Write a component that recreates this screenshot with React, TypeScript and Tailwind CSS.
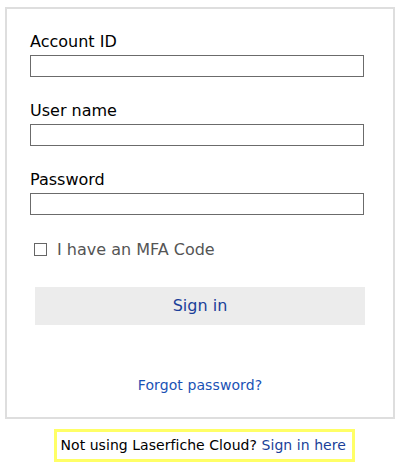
export default function App() {
  const fields = ["Account ID", "User name", "Password"]
  return (
    <div className="min-h-screen bg-white pt-[7px] font-['DejaVu_Sans',sans-serif] text-black">
      <main className="mx-[5px] w-[390px] border-2 border-[#dedede] px-[23px] pt-[23px] pb-[23px]">
        {fields.map((label) => (
          <div key={label} className="mb-[24px]">
            <label className="block text-[16px] leading-[19px]">{label}</label>
            <input
              type={label === "Password" ? "password" : "text"}
              className="mt-1 block h-[22px] w-[334px] border border-[#6b6b6b] px-1 text-[14px] outline-none"
            />
          </div>
        ))}

        <label className="mt-[25px] flex items-center text-[16px] leading-[19px] text-[#555]">
          <input
            type="checkbox"
            className="ml-1 mr-[10px] h-[13px] w-[13px] appearance-none border border-[#666] bg-white"
          />
          I have an MFA Code
        </label>

        <button className="ml-[5px] mt-[28px] block h-[38px] w-[330px] bg-[#ececec] text-[16px] text-[#1a3f99]">
          Sign in
        </button>

        <div className="mt-[52px] text-center text-[14px] leading-[17px]">
          <a href="#" className="tracking-[0.1px] text-[#1a52b5]">
            Forgot password?
          </a>
        </div>
      </main>

      {/* Legacy sign-in link */}
      <div className="mt-[10px] flex justify-center pl-[3px]">
        <div className="w-[301px] border-[3px] border-[#ffff66] py-[5px] pl-[4px] text-[14px] leading-[17px] tracking-[0.05px]">
          Not using Laserfiche Cloud?{" "}
          <a href="#" className="text-[#1a3f99]">
            Sign in here
          </a>
        </div>
      </div>
    </div>
  )
}
